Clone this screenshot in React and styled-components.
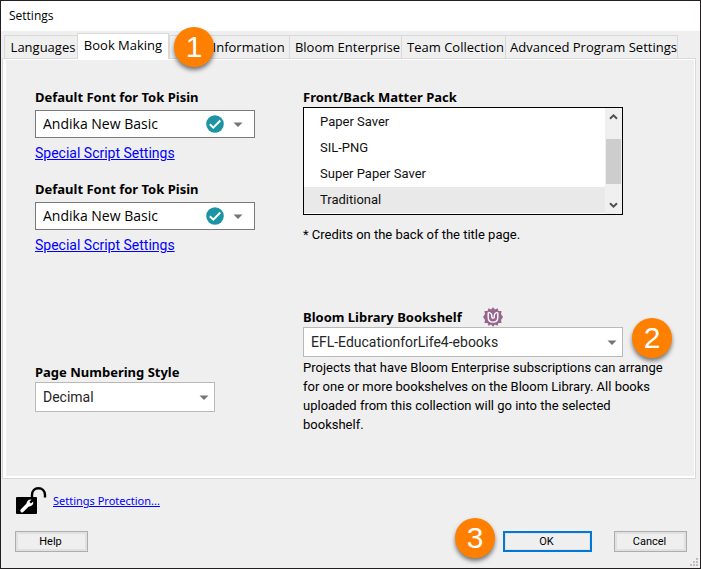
import React from "react";
import styled, { createGlobalStyle, css } from "styled-components";

const uiFont = '"Open Sans", "Noto Sans", sans-serif';
const labelFont = '"Noto Sans", "Open Sans", sans-serif';
const bodyFont = 'Roboto, "Liberation Sans", sans-serif';

const GlobalStyle = createGlobalStyle`
  *, *::before, *::after { box-sizing: border-box; }
  html, body, #root { height: 100%; }
  body { margin: 0; background: #efefef; color: #000; }
  p, h1, h2 { margin: 0; }
`;

const Dialog = styled.main`
  display: flex;
  flex-direction: column;
  position: relative;
  min-height: 100%;
  background: #efefef;
  border: 1px solid #231f20;
  font-family: ${bodyFont};
  font-size: 13px;
`;

const TitleBar = styled.header`
  height: 30px;
  padding-left: 8px;
  background: #fff;
`;

const Title = styled.h1`
  font: 400 12px/30px ${uiFont};
`;

const TabStrip = styled.div`
  display: flex;
  align-items: flex-end;
  height: 27px;
  padding: 0 23px 0 3px;
`;

const Tab = styled.button`
  position: relative;
  flex: 0 0 auto;
  width: ${(p) => p.$width}px;
  height: 23px;
  padding: 0 0 0 4px;
  border: 1px solid #d9d9d9;
  border-bottom: 0;
  border-right-width: ${(p) => (p.$last ? 1 : 0)}px;
  background: #efefef;
  color: #000;
  font: 13px/22px ${uiFont};
  text-align: center;
  white-space: nowrap;

  ${(p) =>
    p.$active &&
    css`
      z-index: 1;
      height: 26px;
      margin-bottom: -1px;
      padding: 0 0 2px;
      border-right-width: 1px;
      background: #fff;
      line-height: 23px;
    `}
`;

const Panel = styled.section`
  display: grid;
  grid-template-columns: 268px minmax(0, 1fr);
  margin: 0 4px 0 1px;
  padding: 28px 28px 44px 32px;
  border: 1px solid #d9d9d9;
  box-shadow: inset 3px 1px #fff, inset -1px -2px #fff;
`;

const Column = styled.div`
  display: flex;
  flex-direction: column;
  align-items: flex-start;
`;

const Field = styled.div`
  display: flex;
  flex-direction: column;
  align-items: flex-start;
  width: 100%;
  margin-top: ${(p) => p.$gap || 0}px;
`;

const Label = styled.label`
  display: flex;
  align-items: center;
  gap: 21px;
  height: 20px;
  margin-bottom: ${(p) => p.$space || 0}px;
  font: 700 13px/20px ${labelFont};
  white-space: nowrap;
`;

const Combo = styled.div`
  display: grid;
  align-items: center;
  position: relative;
  width: ${(p) => p.$width}px;
  max-width: 100%;
`;

const Select = styled.select`
  appearance: none;
  width: 100%;
  height: ${(p) => (p.$font ? 28 : 30)}px;
  padding: 0 32px ${(p) => (p.$font ? 1 : 0)}px 7px;
  border: 1px solid ${(p) => (p.$font ? "#7a7a7a" : "#b9b9b9")};
  border-radius: 0;
  background: #fff;
  color: ${(p) => (p.$font ? "#000" : "#262626")};
  font: 14px ${(p) => (p.$font ? uiFont : bodyFont)};
`;

const ComboMarks = styled.span`
  position: absolute;
  right: ${(p) => p.$right}px;
  display: flex;
  align-items: center;
  gap: 9px;
  pointer-events: none;
  svg { display: block; }
`;

const ScriptLink = styled.a`
  margin-top: 6px;
  color: #00f;
  font: 14px/18px ${bodyFont};
`;

const ListFrame = styled.div`
  display: flex;
  width: 320px;
  max-width: 100%;
  height: 108px;
  border: 1px solid #000;
  background: #fff;
`;

const PackList = styled.select`
  flex: 1;
  height: 106px;
  padding: 1px 0 0;
  border: 0;
  outline: 0;
  border-radius: 0;
  background: #fff;
  color: #111;
  font: 13px ${bodyFont};
  overflow: hidden;
  scrollbar-width: none;

  option {
    height: 26px;
    padding: 5px 16px 0;
  }
  option:checked { background: #e9e9e9 linear-gradient(#e9e9e9, #e9e9e9); }
`;

const ScrollTrack = styled.div`
  display: flex;
  flex-direction: column;
  justify-content: space-between;
  align-items: center;
  width: 17px;
  padding: 5px 1px 5px 0;
  background: #f0f0f0;
  svg { display: block; }
`;

const ScrollThumb = styled.div`
  width: 15px;
  height: 45px;
  background: #cdcdcd;
`;

const Note = styled.p`
  margin-top: ${(p) => p.$gap}px;
  max-width: 360px;
  font: 13px/19px ${bodyFont};
`;

const Footer = styled.footer`
  display: flex;
  flex: 1;
  flex-direction: column;
  justify-content: space-between;
  padding: 8px 13px 16px 14px;
`;

const Protection = styled.div`
  display: flex;
  align-items: center;
  gap: 6px;
  svg { display: block; }
`;

const ProtectionLink = styled.a`
  color: #00f;
  font: 11px/16px ${labelFont};
`;

const ButtonRow = styled.div`
  display: flex;
  justify-content: space-between;
`;

const ButtonGroup = styled.div`
  display: flex;
  gap: 22px;
`;

const ButtonHolder = styled.div`
  position: relative;
`;

const Button = styled.button`
  display: block;
  width: ${(p) => (p.$primary ? 89 : 73)}px;
  height: 21px;
  padding: 0 2px 0 0;
  border: ${(p) => (p.$primary ? "2px solid #0078d7" : "1px solid #adadad")};
  border-radius: 0;
  background: #efefef;
  box-shadow: inset 0 0 0 ${(p) => (p.$primary ? 1 : 2)}px #e1e1e1;
  color: #000;
  font: 11px/16px ${bodyFont};
`;

const StepBadge = styled.span`
  position: absolute;
  z-index: 2;
  top: ${(p) => p.$top}px;
  left: ${(p) => p.$left};
  width: 40px;
  height: 40px;
  border-radius: 50%;
  background: #ff8000;
  box-shadow: 0 3px 4px rgba(0, 0, 0, 0.5);
  color: #fff;
  font: 30px/40px "Liberation Sans", sans-serif;
  text-align: center;
`;

const SizeGrip = styled.svg`
  position: absolute;
  right: 2px;
  bottom: 2px;
`;

const Arrow = () => (
  <svg width="10" height="5" viewBox="0 0 10 5" aria-hidden="true">
    <path d="M0.5 0.5h9L5 5z" fill="#757575" />
  </svg>
);

const Check = () => (
  <svg width="18" height="18" viewBox="0 0 18 18" aria-hidden="true">
    <circle cx="9" cy="9" r="8.8" fill="#1d94a4" />
    <path d="M3.8 9.2l3.5 3.5 7-7.2" fill="none" stroke="#fff" strokeWidth="2" />
  </svg>
);

const Chevron = ({ down }) => (
  <svg width="9" height="7" viewBox="0 0 9 7" aria-hidden="true">
    <path d={down ? "M1 1.2l3.5 3.5L8 1.2" : "M1 5.8l3.5-3.5L8 5.8"} fill="none" stroke="#505050" strokeWidth="2" />
  </svg>
);

const BloomMark = () => (
  <svg width="20" height="20" viewBox="0 0 20 20" aria-hidden="true">
    <path
      d="M10 .3l1.900 2.200 2.600-1.300 1 2.800 3.100-.1-.6 3L20 10l-2 2.900.6 3.200-3.100-.1-1 2.800-2.600-1.300L10 19.700l-1.900-2.200-2.600 1.300-1-2.800-3.100.1.600-3.200L0 10l2-3.100-.6-3 3.100.1 1-2.800 2.600 1.300z"
      fill="#96668f"
    />
    <path d="M5.2 5.400v4.800c0 3.200 1.800 4.900 4.800 4.900s4.800-1.700 4.800-4.900V5.400" fill="none" stroke="#fff" strokeWidth="1.400" />
    <path d="M5.300 5.400c2.600.2 3.600 1.900 3.500 4.200 0 2.300 2.900 1.900 2.500-.4-.3-2 1-3.600 3.400-3.800" fill="none" stroke="#fff" strokeWidth="1.400" />
  </svg>
);

const Padlock = () => (
  <svg width="32" height="28" viewBox="0 0 32 28" aria-hidden="true">
    <rect x="1" y="10" width="21" height="17" rx="1" />
    <path d="M17 11V8c0-4.200 2.700-6.800 6.400-6.800S30 3.800 30 8v2.500" fill="none" stroke="#000" strokeWidth="2.400" />
    <path d="M7.200 23.600l6.400-6.600" stroke="#fff" strokeWidth="3.600" strokeLinecap="round" />
    <path d="M16.500 12.600a4 4 0 0 0-4.600 5.200l1.400 1.500a4 4 0 0 0 4.900-4.700l-2.300 2-1.600-1.600z" fill="#fff" />
  </svg>
);

const tabs = [
  { name: "Languages", width: 73 },
  { name: "Book Making", width: 92, active: true },
  { name: "Book Information", width: 120, step: 1 },
  { name: "Bloom Enterprise", width: 112 },
  { name: "Team Collection", width: 104 },
  { name: "Advanced Program Settings", width: 173 },
];

const packs = ["Paper Saver", "SIL-PNG", "Super Paper Saver", "Traditional"];

function FontField({ id, gap }) {
  return (
    <Field $gap={gap}>
      <Label htmlFor={id} $space={3}>Default Font for Tok Pisin</Label>
      <Combo $width={220}>
        <Select id={id} $font>
          <option>Andika New Basic</option>
        </Select>
        <ComboMarks $right={12}>
          <Check />
          <Arrow />
        </ComboMarks>
      </Combo>
      <ScriptLink href="#script">Special Script Settings</ScriptLink>
    </Field>
  );
}

export default function App() {
  return (
    <Dialog>
      <GlobalStyle />
      <TitleBar>
        <Title>Settings</Title>
      </TitleBar>
      <TabStrip role="tablist">
        {tabs.map((t, i) => (
          <Tab
            key={t.name}
            role="tab"
            aria-selected={!!t.active}
            $width={t.width}
            $active={t.active}
            $last={i === tabs.length - 1}
          >
            {t.name}
            {t.step && <StepBadge $top={-9} $left="4px">{t.step}</StepBadge>}
          </Tab>
        ))}
      </TabStrip>
      <Panel role="tabpanel">
        <Column>
          <FontField id="font-1" />
          <FontField id="font-2" gap={17} />
          <Field $gap={108}>
            <Label htmlFor="numbering">Page Numbering Style</Label>
            <Combo $width={180}>
              <Select id="numbering">
                <option>Decimal</option>
              </Select>
              <ComboMarks $right={6}>
                <Arrow />
              </ComboMarks>
            </Combo>
          </Field>
        </Column>
        <Column>
          <Field>
            <Label htmlFor="packs">Front/Back Matter Pack</Label>
            <ListFrame>
              <PackList id="packs" size={4} defaultValue="Traditional">
                {packs.map((p) => (
                  <option key={p}>{p}</option>
                ))}
              </PackList>
              <ScrollTrack>
                <Chevron />
                <ScrollThumb />
                <Chevron down />
              </ScrollTrack>
            </ListFrame>
            <Note $gap={10}>* Credits on the back of the title page.</Note>
          </Field>
          <Field $gap={63}>
            <Label htmlFor="bookshelf">
              Bloom Library Bookshelf
              <BloomMark />
            </Label>
            <Combo $width={320}>
              <Select id="bookshelf">
                <option>EFL-EducationforLife4-ebooks</option>
              </Select>
              <ComboMarks $right={6}>
                <Arrow />
              </ComboMarks>
              <StepBadge $top={-9} $left="calc(100% + 9px)">2</StepBadge>
            </Combo>
            <Note $gap={1}>
              Projects that have Bloom Enterprise subscriptions can arrange for one or more
              bookshelves on the Bloom Library. All books uploaded from this collection will go
              into the selected bookshelf.
            </Note>
          </Field>
        </Column>
      </Panel>
      <Footer>
        <Protection>
          <Padlock />
          <ProtectionLink href="#protection">Settings Protection...</ProtectionLink>
        </Protection>
        <ButtonRow>
          <Button>Help</Button>
          <ButtonGroup>
            <ButtonHolder>
              <Button $primary>OK</Button>
              <StepBadge $top={-13} $left="-48px">3</StepBadge>
            </ButtonHolder>
            <Button>Cancel</Button>
          </ButtonGroup>
        </ButtonRow>
      </Footer>
      <SizeGrip width="8" height="8" viewBox="0 0 8 8" aria-hidden="true">
        <path d="M6 0h2v2H6zM3 3h2v2H3zM6 3h2v2H6zM0 6h2v2H0zM3 6h2v2H3zM6 6h2v2H6z" fill="#bfbfbf" />
      </SizeGrip>
    </Dialog>
  );
}
